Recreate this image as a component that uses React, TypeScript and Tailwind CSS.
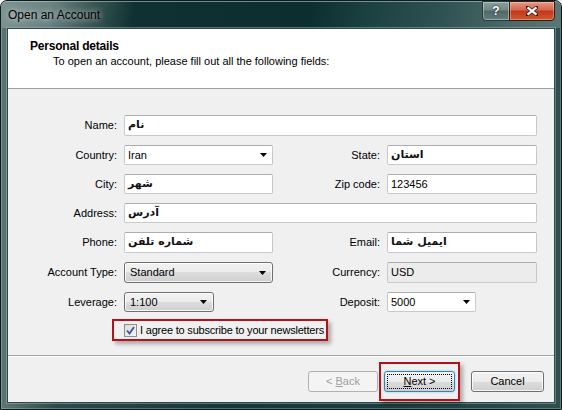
import React from 'react';

function Arrow() {
  return (
    <svg width="7" height="4" viewBox="0 0 7 4" className="shrink-0">
      <path d="M0 0h7L3.5 4z" fill="#000" />
    </svg>
  );
}

function TextBox({ value, rtl, gray }: { value: string; rtl?: boolean; gray?: boolean }) {
  return (
    <div
      className={`h-full border border-[#c6cad0] border-t-[#abadb3] rounded-[2px] flex items-center px-[3px] ${
        gray ? 'bg-[#ececec]' : 'bg-white'
      }`}
    >
      <span
        className={
          rtl
            ? "font-['DejaVu_Sans',sans-serif] font-bold text-[11px] text-[#111]"
            : 'text-[11px] text-black'
        }
      >
        {value}
      </span>
    </div>
  );
}

function EditCombo({ value, className = '' }: { value: string; className?: string }) {
  return (
    <div
      className={`h-full bg-white border border-[#c6cad0] border-t-[#abadb3] rounded-[2px] flex items-center justify-between pl-[3px] pr-[5px] ${className}`}
    >
      <span className="text-[11px]">{value}</span>
      <Arrow />
    </div>
  );
}

function ListCombo({ value, className = '' }: { value: string; className?: string }) {
  return (
    <div
      className={`h-full rounded-[3px] border border-[#707070] bg-[linear-gradient(#f2f2f2_0%,#ebebeb_50%,#dddddd_50%,#cfcfcf_100%)] shadow-[inset_0_0_0_1px_rgba(255,255,255,0.8)] flex items-center justify-between pl-[5px] pr-[6px] ${className}`}
    >
      <span className="text-[11px]">{value}</span>
      <Arrow />
    </div>
  );
}

function Label({ children }: { children: React.ReactNode }) {
  return <div className="flex items-center justify-end text-[11px] text-black">{children}</div>;
}

export default function App() {
  return (
    <div className="w-[562px] h-[410px] font-['Liberation_Sans',Arial,sans-serif] bg-[#f0f0f0]">
      <div className="w-full h-full flex flex-col rounded-t-[7px] border border-[#0b1c1c] bg-[linear-gradient(to_right,#5d7675_0%,#2c4a4a_10%,#163737_40%,#1b3d3d_70%,#2f4f4f_100%)] shadow-[inset_0_0_0_1px_rgba(190,210,210,0.35)]">
        {/* title bar */}
        <div className="h-[27px] flex items-start justify-between rounded-t-[6px] bg-[linear-gradient(100deg,#7d9493_0%,#6a8382_9%,#3d5958_16%,#0f3132_24%,#0c2e2f_55%,#1a3f3f_64%,#2e5151_78%,#4d6b6a_92%,#5a7675_100%)] border-t border-[#b9c7c7]/60">
          <div className="pl-[7px] pt-[6px] text-[12px] leading-[15px] text-black [text-shadow:0_0_6px_rgba(255,255,255,0.9)]">
            Open an Account
          </div>
          <div className="flex -mt-px mr-[6px]">
            <div className="w-[28px] h-[20px] rounded-bl-[4px] border border-[#233b3b] bg-[linear-gradient(#8a9e9e_0%,#718786_45%,#4f6767_50%,#657c7c_100%)] flex items-center justify-center shadow-[inset_0_0_0_1px_rgba(255,255,255,0.35)]">
              <span className="text-white font-bold text-[12px] leading-none [text-shadow:0_0_2px_#000]">?</span>
            </div>
            <div className="w-[46px] h-[20px] -ml-px rounded-br-[4px] border border-[#3b1a12] bg-[linear-gradient(#e59a85_0%,#d4644a_45%,#c0381c_50%,#d2582e_100%)] flex items-center justify-center shadow-[inset_0_0_0_1px_rgba(255,255,255,0.3)]">
              <svg width="12" height="10" viewBox="0 0 12 10">
                <path d="M1 1l10 8M11 1L1 9" stroke="#3a1a10" strokeWidth="3.6" strokeLinecap="square" />
                <path d="M1.5 1.3l9 7.4M10.5 1.3l-9 7.4" stroke="#fff" strokeWidth="2.2" />
              </svg>
            </div>
          </div>
        </div>

        {/* client area */}
        <div className="flex-1 mx-[6px] mb-[6px] border border-[#2e4848] shadow-[0_0_0_1px_rgba(170,190,190,0.45)] bg-[#f0f0f0] flex flex-col">
          <div className="h-[60px] shrink-0 bg-white border-b border-[#a0a0a0] pt-[10px] pl-[22px]">
            <div className="text-[12px] leading-[15px] font-bold text-black tracking-[-0.2px]">Personal details</div>
            <div className="text-[11px] leading-[15px] pl-[23px] text-black">
              To open an account, please fill out all the following fields:
            </div>
          </div>

          <div className="flex-1 pt-[26px]">
            <div className="grid grid-cols-[109px_149px_100px_150px] grid-rows-[21px_20px_20px_20px_21px_21px_20px] gap-x-[7px] gap-y-[9px]">
              <Label>Name:</Label>
              <div className="col-span-3">
                <TextBox value="نام" rtl />
              </div>

              <Label>Country:</Label>
              <EditCombo value="Iran" />
              <Label>State:</Label>
              <TextBox value="استان" rtl />

              <Label>City:</Label>
              <TextBox value="شهر" rtl />
              <Label>Zip code:</Label>
              <TextBox value="123456" />

              <Label>Address:</Label>
              <div className="col-span-3">
                <TextBox value="آدرس" rtl />
              </div>

              <Label>Phone:</Label>
              <TextBox value="شماره تلفن" rtl />
              <Label>Email:</Label>
              <TextBox value="ایمیل شما" rtl />

              <Label>Account Type:</Label>
              <ListCombo value="Standard" />
              <Label>Currency:</Label>
              <TextBox value="USD" gray />

              <Label>Leverage:</Label>
              <ListCombo value="1:100" className="w-[90px]" />
              <Label>Deposit:</Label>
              <EditCombo value="5000" className="w-[89px]" />
            </div>

            <div className="ml-[104px] mt-[7px] inline-flex items-center h-[22px] pl-[10px] pr-[2px] border-2 border-[#b8101a] shadow-[3px_3px_4px_rgba(0,0,0,0.3)]">
              <div className="w-[13px] h-[13px] border border-[#8e8f8f] bg-[linear-gradient(135deg,#dcdcdc,#f6f6f6)] flex items-center justify-center">
                <svg width="9" height="9" viewBox="0 0 9 9">
                  <path d="M1 4.5l2.5 3L8 1" fill="none" stroke="#3d55a0" strokeWidth="1.8" />
                </svg>
              </div>
              <span className="ml-[3px] text-[11px] tracking-[-0.2px] text-black">
                I agree to subscribe to your newsletters
              </span>
            </div>
          </div>

          <div className="shrink-0 h-px bg-[#a0a0a0]" />
          <div className="shrink-0 h-px bg-white" />
          <div className="shrink-0 flex justify-end items-center pt-[14px] pb-[10px] pr-[10px]">
            <div className="w-[70px] h-[21px] rounded-[3px] border border-[#adb2b5] bg-[#f4f4f4] flex items-center justify-center text-[11px] text-[#a0a0a0]">
              &lt; <span className="underline ml-[3px]">B</span>ack
            </div>
            <div className="ml-[1px] -my-[9px] border-2 border-[#b8101a] px-[3px] py-[7px] shadow-[3px_3px_4px_rgba(0,0,0,0.3)]">
              <div className="w-[71px] h-[21px] rounded-[3px] border border-[#3c7fb1] bg-[linear-gradient(#f2f2f2_0%,#ebebeb_50%,#dddddd_50%,#cfcfcf_100%)] shadow-[0_0_2px_#5fc1f1] p-[2px]">
                <div className="w-full h-full border border-dotted border-black flex items-center justify-center text-[11px] text-black">
                  <span className="underline">N</span>ext &gt;
                </div>
              </div>
            </div>
            <div className="ml-[11px] w-[73px] h-[21px] rounded-[3px] border border-[#707070] bg-[linear-gradient(#f2f2f2_0%,#ebebeb_50%,#dddddd_50%,#cfcfcf_100%)] shadow-[inset_0_0_0_1px_rgba(255,255,255,0.8)] flex items-center justify-center text-[11px] text-black">
              Cancel
            </div>
          </div>
        </div>
      </div>
    </div>
  );
}
